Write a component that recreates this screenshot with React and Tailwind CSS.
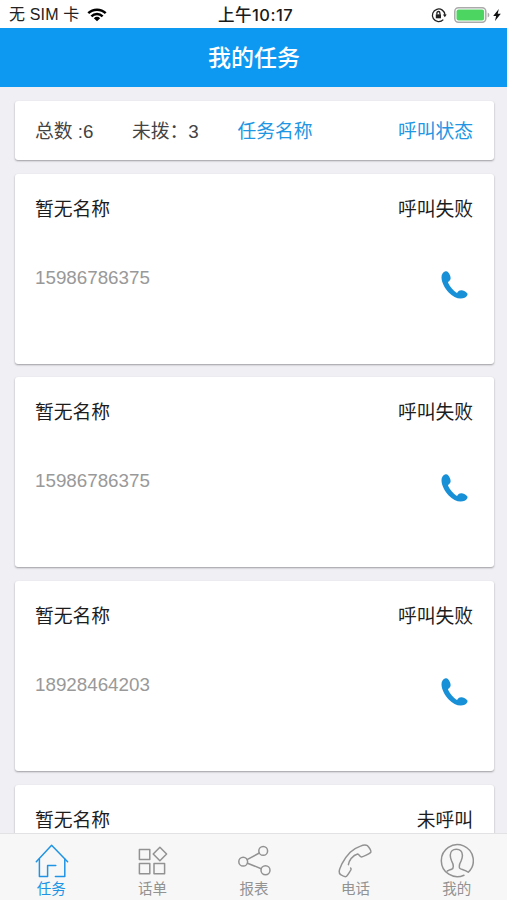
const tasks = [
  { name: "暂无名称", status: "呼叫失败", phone: "15986786375" },
  { name: "暂无名称", status: "呼叫失败", phone: "15986786375" },
  { name: "暂无名称", status: "呼叫失败", phone: "18928464203" },
  { name: "暂无名称", status: "未呼叫", phone: "" },
];

const tabs = [
  {
    label: "任务",
    active: true,
    icon: (
      <>
        <path d="M3.3 18.8 18.6 2.2 34.6 18.8" />
        <path d="M6.4 16v17.4h8.2V22.6h8.2M31.8 16v17.4h-9.4" />
      </>
    ),
  },
  {
    label: "话单",
    icon: (
      <>
        <path d="M5.4 6.4h10.4v10.2H5.4zM5.4 20.4h10.4v10.4H5.4zM20 20.4h10.6v10.4H20z" />
        <path d="M25.9 4.2 32.6 11l-6.7 6.8L19.2 11z" />
      </>
    ),
  },
  {
    label: "报表",
    icon: (
      <>
        <circle cx="7.2" cy="18.7" r="4.4" />
        <circle cx="27.2" cy="7.9" r="4.4" />
        <circle cx="29.5" cy="27.3" r="4.5" />
        <path d="m11.1 16.6 12.2-6.6M11.5 20.2l13.7 5.5" />
      </>
    ),
  },
  {
    label: "电话",
    icon: (
      <path d="M11.4 21.7c.4-2.4 1.4-4.5 2.7-6.2 1.9-2.2 4.2-4 6.5-4.5 1.6.3 2.2 2.7 4 2.9 1.4.1 7.8-3.2 9.2-4.5.8-1.2-1.7-5.2-3.3-6.7-1.7-.9-4.8-.5-7 .4C19.5 4.500 16 6.500 13.200 9.200 9.500 13 7.200 16.400 5.200 20.300c-1.300 2.900-2.800 5.400-3 8-.1 1.800.3 2.600 1.400 3.300 1.600 1 4 2.200 5.200 2 1.500-.4 3.400-4.200 5.100-6.700.4-.8.200-1.400-.3-1.900" />
    ),
  },
  {
    label: "我的",
    icon: (
      <>
        <path d="M26 32.200A16 16 0 1 1 30.300 29.300C28 27.200 25.300 26.800 22.600 25.900c-1.200-.5-1.500-1.300-1.300-2.500.100-2.400.7-3.600 1.700-5.300 1-1.900 1.500-3.800 1.400-6C24.200 8.600 21.700 6.300 18.300 6.300s-5.900 2.300-6 5.800c-.100 2.200.4 4.100 1.400 6 1 1.700 1.500 2.900 1.600 5.300 0 1.600-.5 2.300-1.700 2.900-1.500.6-2.900.900-4.200 1.700" />
      </>
    ),
  },
];

const StatusBar = () => (
  <div className="relative flex h-7 shrink-0 items-center justify-between bg-white pl-[9px] pr-[6px] pt-[2px] text-black">
    <div className="flex items-center gap-[8px]">
      <span className="text-[16px] leading-none tracking-[0.15px] text-[#222]">无 SIM 卡</span>
      <svg width="20" height="14" viewBox="0 0 20 14" fill="none" stroke="currentColor" strokeWidth="2.5">
        <path d="M1.3 5.2a12.400 12.400 0 0 1 17.400 0M4.400 8.300a8 8 0 0 1 11.200 0" />
        <path d="M10 13.300 6.800 10.200a4.700 4.700 0 0 1 6.400 0z" fill="currentColor" stroke="none" />
      </svg>
    </div>
    <span className="absolute left-[218px] top-[7px] font-['Inter','Noto_Sans_CJK_SC',sans-serif] text-[16.5px] font-medium leading-none tracking-[0.5px] text-[#1a1a1a]">
      上午10:17
    </span>
    <div className="flex items-center">
      <svg width="16" height="16" viewBox="0 0 16 16" fill="none" stroke="#222" strokeWidth="1.3">
        <path d="M12.300 12.600A6.300 6.300 0 1 1 14 8" />
        <path d="M11.900 7.400h3.800l-1.900 2.800z" fill="#222" stroke="none" />
        <path d="M4.800 7.300h5.200v4H4.800z" fill="#222" stroke="none" />
        <path d="M5.900 7.500V6a1.500 1.500 0 0 1 3 0v1.500" />
      </svg>
      <svg className="ml-[7px]" width="37" height="16" viewBox="0 0 37 16">
        <rect x=".8" y=".8" width="31" height="14.4" rx="3.6" fill="#fff" stroke="#aaa" strokeWidth="1.5" />
        <rect x="2.5" y="2.5" width="27.6" height="11" rx="2" fill="#4cd661" />
        <path d="M33.700 5.600q1.700.6 1.700 2.400t-1.700 2.400z" fill="#aaa" />
      </svg>
      <svg className="ml-[2px]" width="8" height="12" viewBox="0 0 8 12">
        <path d="M5.800 0 .2 6.900h2.900L2 12l5.800-7.200H4.700z" fill="#111" />
      </svg>
    </div>
  </div>
);

const PhoneIcon = () => (
  <svg width="27" height="28" viewBox="0 0 27 28" fill="#1890d8">
    <path d="M4.600.2C2 .9.400 3.200.5 6.500c.2 5.100 3.200 10.700 7.200 14.900 3.700 3.800 8 6.200 12 6.200 3 0 5.400-1.200 6.600-3.300.5-1 .3-1.700-.6-2.500-1.500-1.300-3.200-2.300-5.200-2.500-1.800-.1-3.200.6-3.900 2-.3.600-.9.700-1.500.2-3.200-2.300-6-5.700-7.900-9.500-.3-.7-.1-1.200.5-1.600 1.600-.9 2.200-2.400 1.800-4.400C9.100 3.900 8.100 2.100 6.900.9 6.200.2 5.500 0 4.600.2z" />
  </svg>
);

const TaskCard = ({ task }) => (
  <div className="h-[190px] shrink-0 rounded-[3px] bg-white px-[20.5px] pt-[22px] shadow-[0_1px_2px_rgba(0,0,0,0.35)]">
    <div className="flex justify-between text-[18.8px] leading-7 text-[#1c1c1c]">
      <span>{task.name}</span>
      <span>{task.status}</span>
    </div>
    {task.phone && (
      <div className="mt-[40px] flex justify-between pr-[5px]">
        <span className="text-[18.8px] leading-7 text-[#999]">{task.phone}</span>
        <div className="pt-[7px]">
          <PhoneIcon />
        </div>
      </div>
    )}
  </div>
);

const TabBar = () => (
  <nav className="flex h-[67px] shrink-0 border-t border-[#e2e2e4] bg-[#f7f7f7]">
    {tabs.map((tab) => (
      <div
        key={tab.label}
        className={`flex flex-1 flex-col items-center pt-[9px] ${tab.active ? "text-[#2094e4]" : "text-[#929292]"}`}
      >
        <svg
          width="36"
          height="36"
          viewBox="0 0 36 36"
          fill="none"
          stroke="currentColor"
          strokeWidth="1.5"
          strokeLinecap="round"
          strokeLinejoin="round"
        >
          {tab.icon}
        </svg>
        <span className="ml-px mt-[2px] text-[14.5px] leading-[16px]">{tab.label}</span>
      </div>
    ))}
  </nav>
);

const App = () => {
  return (
    <div className="flex h-[900px] w-[507px] flex-col overflow-hidden bg-[#efeff4] font-['Liberation_Sans','Noto_Sans_CJK_SC',sans-serif]">
      <StatusBar />
      <header className="flex h-[59px] shrink-0 items-center justify-center bg-[#0d99f2] pl-px pt-[2px] text-[23px] font-medium text-white">
        我的任务
      </header>

      <main className="flex min-h-0 flex-1 flex-col gap-[13.7px] overflow-hidden pl-[14.5px] pr-[13.5px] pt-[13.5px]">
        {/* summary row */}
        <div className="flex h-[59.5px] shrink-0 items-center rounded-[3px] bg-white px-[20.5px] pt-[4px] text-[18.8px] text-[#444] shadow-[0_1px_2px_rgba(0,0,0,0.35)]">
          <span className="w-[97px]">总数 :6</span>
          <span className="w-[105.500px]">未拨：3</span>
          <span className="text-[#2196e3]">任务名称</span>
          <span className="ml-auto text-[#2196e3]">呼叫状态</span>
        </div>

        {tasks.map((task, i) => (
          <TaskCard key={i} task={task} />
        ))}
      </main>

      <TabBar />
    </div>
  );
};

export default App;
